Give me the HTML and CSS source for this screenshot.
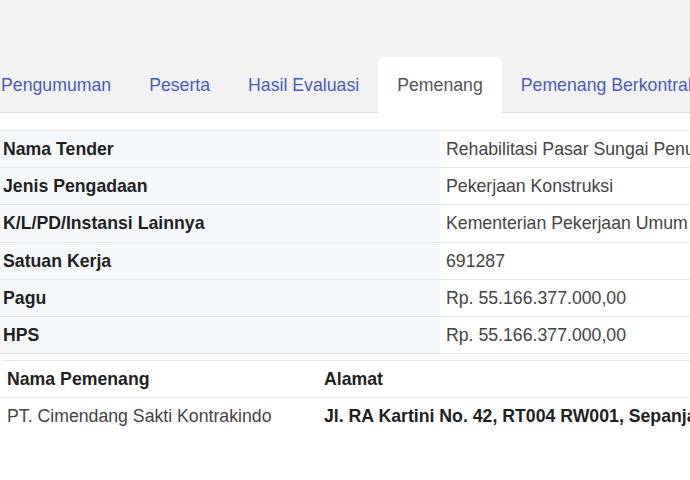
FILE: index.html
```html
<!DOCTYPE html>
<html lang="en">
<head>
    <meta charset="UTF-8">
    <title>Pemenang</title>
    <link rel="stylesheet" href="styles.css">
</head>
<body>

<div class="header">
    <ul class="nav-tabs">
        <li><a href="#">Pengumuman</a></li>
        <li><a href="#">Peserta</a></li>
        <li><a href="#">Hasil Evaluasi</a></li>
        <li class="active"><a href="#">Pemenang</a></li>
        <li><a href="#">Pemenang Berkontrak</a></li>
    </ul>
</div>

<div class="content">
    <table class="info-table">
        <tr><th>Nama Tender</th><td>Rehabilitasi Pasar Sungai Penuh</td></tr>
        <tr><th>Jenis Pengadaan</th><td>Pekerjaan Konstruksi</td></tr>
        <tr><th>K/L/PD/Instansi Lainnya</th><td>Kementerian Pekerjaan Umum dan Perumahan Rakyat</td></tr>
        <tr><th>Satuan Kerja</th><td>691287</td></tr>
        <tr><th>Pagu</th><td>Rp. 55.166.377.000,00</td></tr>
        <tr><th>HPS</th><td>Rp. 55.166.377.000,00</td></tr>
    </table>

    <table class="winner-table">
        <tr><th class="col-name">Nama Pemenang</th><th>Alamat</th></tr>
        <tr><td>PT. Cimendang Sakti Kontrakindo</td><td class="address">Jl. RA Kartini No. 42, RT004 RW001, Sepanjang Jaya</td></tr>
    </table>
</div>

</body>
</html>
```

FILE: styles.css
```css
* {
    box-sizing: border-box;
}

body {
    font-family: "Liberation Sans", Arial, sans-serif;
    font-size: 17.7px;
    margin: 0;
    padding: 0;
    background-color: #ffffff;
    color: #333333;
    overflow: hidden;
}

.header {
    background-color: #f2f2f2;
    padding-top: 57px;
}

.nav-tabs {
    display: flex;
    list-style: none;
    margin: 0 0 0 -18px;
    padding: 0;
    border-bottom: 1px solid #dddddd;
    white-space: nowrap;
}

.nav-tabs li {
    margin-bottom: -1px;
}

.nav-tabs a {
    display: block;
    height: 56px;
    line-height: 56px;
    padding: 0 19px;
    color: #4a5bc0;
    text-decoration: none;
    border-radius: 5px 5px 0 0;
}

.nav-tabs li.active a {
    background-color: #ffffff;
    color: #555555;
}

.content {
    padding-top: 17px;
}

table {
    border-collapse: collapse;
    white-space: nowrap;
}

.info-table {
    margin-left: -3px;
    width: 1000px;
}

.info-table th,
.info-table td {
    padding: 8px 6px;
    line-height: 20.2px;
    border-top: 1px solid #e3e8ec;
    border-bottom: 1px solid #e3e8ec;
    text-align: left;
}

.info-table th {
    width: 443px;
    background-color: #f4f8fb;
    color: #1f1f1f;
}

.info-table td {
    background-color: #ffffff;
    color: #444444;
}

.winner-table {
    margin-top: 6px;
    margin-left: 1px;
    width: 1000px;
}

.winner-table th,
.winner-table td {
    padding: 8px 6px;
    line-height: 20.2px;
    text-align: left;
}

.winner-table th {
    border-top: 1px solid #e3e8ec;
    border-bottom: 1px solid #e3e8ec;
    color: #1f1f1f;
}

.winner-table .col-name {
    width: 317px;
}

.winner-table td {
    color: #444444;
}

.winner-table .address {
    font-weight: bold;
    color: #1f1f1f;
}
```
